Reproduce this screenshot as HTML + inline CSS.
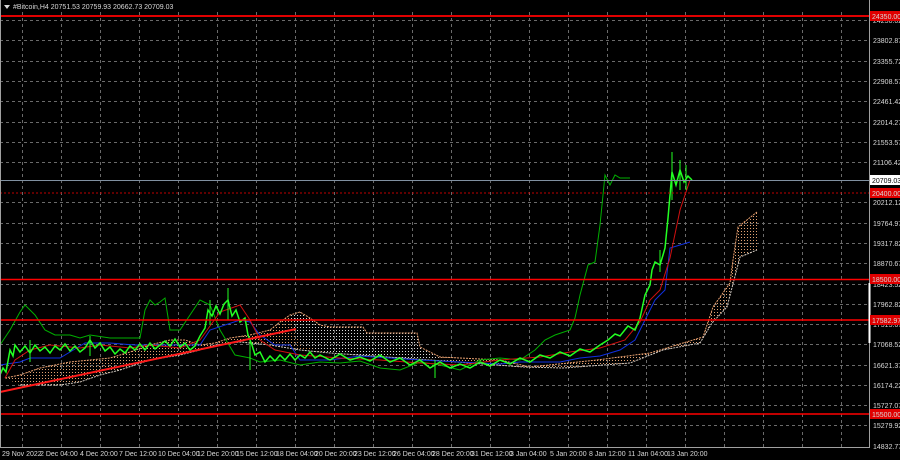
<!DOCTYPE html>
<html><head><meta charset="utf-8"><style>
html,body{margin:0;padding:0;background:#000;width:900px;height:460px;overflow:hidden}
svg{display:block}
text{font-family:"Liberation Sans",sans-serif;font-size:7px;fill:#d8d8d8}
</style></head><body>
<svg width="900" height="460" viewBox="0 0 900 460" xmlns="http://www.w3.org/2000/svg">
<defs>
<pattern id="dotT" width="3" height="3" patternUnits="userSpaceOnUse"><rect width="1" height="1" fill="#e0a070"/></pattern>
<pattern id="dotW" width="3" height="3" patternUnits="userSpaceOnUse"><rect width="1" height="1" fill="#d8d8d8"/></pattern>
</defs>
<rect width="900" height="460" fill="#000"/>
<g stroke="#6a6a6a" stroke-width="1" stroke-dasharray="3,3">
<path d="M0 20.5H869M0 40.5H869M0 61.5H869M0 81.5H869M0 101.5H869M0 122.5H869M0 142.5H869M0 162.5H869M0 202.5H869M0 223.5H869M0 243.5H869M0 263.5H869M0 284.5H869M0 304.5H869M0 324.5H869M0 344.5H869M0 365.5H869M0 385.5H869M0 405.5H869M0 425.5H869"/>
<path d="M22.5 12V447M61.5 12V447M100.5 12V447M139.5 12V447M178.5 12V447M217.5 12V447M256.5 12V447M295.5 12V447M334.5 12V447M373.5 12V447M412.5 12V447M451.5 12V447M490.5 12V447M529.5 12V447M568.5 12V447M607.5 12V447M646.5 12V447M685.5 12V447M724.5 12V447M763.5 12V447M802.5 12V447M841.5 12V447"/>
</g>
<polygon points="5,378 20,375 40,368 55,365 70,362 90,360 110,358 130,352 150,345 170,340 185,340 200,345 215,343 230,338 250,335 270,330 280,322 290,315 300,312 310,318 320,325 330,327 363,327 367,333 417,333 420,347 440,357 500,360 530,367 597,360 650,353 683,343 703,337 713,307 730,283 733,260 738,227 757,212 757,250 740,257 727,307 712,323 700,343 663,350 630,363 563,368 523,367 430,360 330,353 300,350 270,345 240,342 215,345 200,350 180,355 150,360 120,370 100,375 80,382 60,385 40,385 20,385" fill="url(#dotT)"/>
<polygon points="290,315 300,312 320,325 363,327 367,333 417,333 420,347 440,357 430,360 330,353 300,345" fill="url(#dotW)"/>
<polyline points="5,378 20,375 40,368 55,365 70,362 90,360 110,358 130,352 150,345 170,340 185,340 200,345 215,343 230,338 250,335 270,330 280,322 290,315 300,312 310,318 320,325 330,327 363,327 367,333 417,333 420,347 440,357 500,360 530,367 597,360 650,353 683,343 703,337 713,307 730,283 733,260 738,227 757,212" fill="none" stroke="#e8a070" stroke-width="1" stroke-dasharray="2,1"/>
<polyline points="20,385 40,385 60,385 80,382 100,375 120,370 150,360 180,355 200,350 215,345 240,342 270,345 300,350 330,353 430,360 523,367 563,368 630,363 663,350 700,343 712,323 727,307 740,257 757,250" fill="none" stroke="#d0c8c0" stroke-width="1" stroke-dasharray="2,1"/>
<polyline points="0,345 10,330 20,312 25,305 35,315 45,330 55,335 70,335 80,338 90,335 110,338 140,338 145,310 150,300 155,305 160,302 165,298 170,330 180,330 190,315 200,300 210,305 220,330 235,355 250,358 260,362 280,360 300,365 320,362 340,363 360,361 380,368 400,370 420,362 440,365 460,370 480,360 500,358 520,360 535,350 545,340 555,335 570,330 575,318 580,295 588,265 595,262 600,225 605,175 610,185 615,175 620,178 630,178" fill="none" stroke="#00b000" stroke-width="1"/>
<polyline points="0,365 20,362 30,358 60,358 85,343 110,343 135,345 170,345 200,345 210,330 240,320 250,322 260,335 275,345 290,345 300,360 330,360 360,356 420,360 460,362 500,364 520,362 560,362 580,358 600,356 620,350 635,340 645,320 655,300 665,290 670,248 690,242" fill="none" stroke="#1030e0" stroke-width="1"/>
<polyline points="5,378 15,360 30,350 50,345 80,348 100,345 130,348 150,345 180,348 200,340 220,312 240,305 250,320 260,340 275,350 300,355 340,358 380,360 420,363 460,365 500,360 540,357 570,352 600,348 625,340 640,322 650,300 660,290 670,258 680,210 690,180" fill="none" stroke="#d01010" stroke-width="1"/>
<polyline points="0,375 3,368 6,372 10,350 13,356 15,345 20,352 25,346 30,353 35,345 40,351 45,347 50,353 55,346 60,350 65,344 70,351 75,346 80,352 85,348 90,340 95,348 100,343 105,351 110,347 115,354 120,349 125,353 130,346 135,350 140,344 145,350 150,343 155,349 160,345 165,341 170,346 175,339 180,347 185,343 190,350 195,346 200,336 205,328 208,310 212,316 216,306 220,314 224,304 228,300 232,316 236,310 240,322 245,318 248,335 252,345 255,355 260,352 265,362 270,356 275,361 280,355 285,360 290,354 295,360 300,355 305,358 310,352 315,358 320,355 330,360 340,354 350,360 360,357 370,361 380,355 390,362 400,358 410,365 420,360 430,368 440,362 450,368 460,364 470,368 480,362 490,366 500,360 510,364 520,358 530,362 540,355 550,358 560,352 570,356 580,349 590,352 600,345 608,340 615,334 620,336 628,326 635,330 640,318 645,295 650,285 652,270 655,262 660,265 663,255 665,248 668,218 672,172 676,185 680,170 684,182 688,176 692,180" fill="none" stroke="#22ff22" stroke-width="1.5"/>
<g stroke="#22ff22" stroke-width="1"><path d="M228 288V320M672 152V200M680 160V190M210 300V325M250 340V370M435 360V378M30 340V362M90 336V356M686 165V190M660 250V272"/></g>
<line x1="0" y1="392" x2="296" y2="329" stroke="#ff1a1a" stroke-width="2"/>
<line x1="0" y1="16" x2="869" y2="16" stroke="#e00000" stroke-width="2"/>
<line x1="0" y1="193" x2="869" y2="193" stroke="#c00000" stroke-width="1" stroke-dasharray="2,2"/>
<line x1="0" y1="180.5" x2="869" y2="180.5" stroke="#8090a0" stroke-width="1"/>
<line x1="0" y1="279.5" x2="869" y2="279.5" stroke="#ff0000" stroke-width="1.5"/>
<line x1="0" y1="320" x2="869" y2="320" stroke="#ff0000" stroke-width="1.5"/>
<line x1="0" y1="414" x2="869" y2="414" stroke="#ff0000" stroke-width="1.5"/>
<line x1="869.5" y1="0" x2="869.5" y2="447" stroke="#a0a0a0"/>
<line x1="0" y1="447.5" x2="870" y2="447.5" stroke="#a0a0a0"/>
<line x1="0.5" y1="0" x2="0.5" y2="447" stroke="#a0a0a0"/>
<line x1="869.5" y1="283" x2="869.5" y2="343" stroke="#fff" stroke-width="2"/>
<g>
<text x="873" y="23">24250.02</text><text x="873" y="43">23802.87</text><text x="873" y="64">23355.72</text><text x="873" y="84">22908.57</text><text x="873" y="104">22461.42</text><text x="873" y="125">22014.27</text><text x="873" y="145">21553.57</text><text x="873" y="165">21106.42</text><text x="873" y="205">20212.12</text><text x="873" y="226">19764.97</text><text x="873" y="246">19317.82</text><text x="873" y="266">18870.67</text><text x="873" y="287">18423.52</text><text x="873" y="307">17962.82</text><text x="873" y="327">17515.67</text><text x="873" y="347">17068.52</text><text x="873" y="368">16621.37</text><text x="873" y="388">16174.22</text><text x="873" y="408">15727.07</text><text x="873" y="428">15279.92</text><text x="873" y="449">14832.77</text>
</g>
<rect x="870" y="11" width="30" height="10" fill="#e00000"/><text x="872" y="19">24350.00</text>
<rect x="870" y="175" width="30" height="10" fill="#fff"/><text x="872" y="183" style="fill:#000">20709.03</text>
<rect x="870" y="188" width="30" height="10" fill="#e00000"/><text x="872" y="196">20400.00</text>
<rect x="870" y="274" width="30" height="10" fill="#e00000"/><text x="872" y="282">18500.00</text>
<rect x="870" y="315" width="30" height="10" fill="#e00000"/><text x="872" y="323">17582.97</text>
<rect x="870" y="409" width="30" height="10" fill="#e00000"/><text x="872" y="417">15500.00</text>
<g>
<text x="2" y="456">29 Nov 2022</text><text x="40" y="456">2 Dec 04:00</text><text x="80" y="456">4 Dec 20:00</text><text x="119" y="456">7 Dec 12:00</text><text x="158" y="456">10 Dec 04:00</text><text x="197" y="456">12 Dec 20:00</text><text x="236" y="456">15 Dec 12:00</text><text x="276" y="456">18 Dec 04:00</text><text x="315" y="456">20 Dec 20:00</text><text x="354" y="456">23 Dec 12:00</text><text x="393" y="456">26 Dec 04:00</text><text x="432" y="456">28 Dec 20:00</text><text x="471" y="456">31 Dec 12:00</text><text x="510" y="456">3 Jan 04:00</text><text x="550" y="456">5 Jan 20:00</text><text x="589" y="456">8 Jan 12:00</text><text x="628" y="456">11 Jan 04:00</text><text x="667" y="456">13 Jan 20:00</text>
</g>
<path d="M4 5L10 5L7 9Z" fill="#d8d8d8"/>
<text x="13" y="9">#Bitcoin,H4  20751.53 20759.93 20662.73 20709.03</text>
</svg>
</body></html>
